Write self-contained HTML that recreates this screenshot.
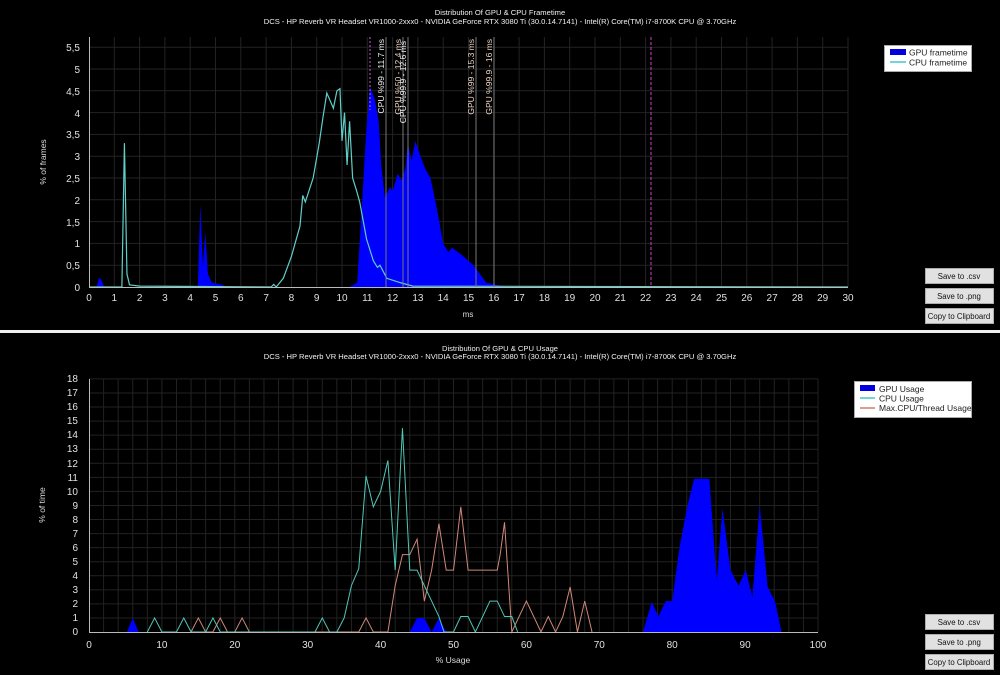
<!DOCTYPE html>
<html><head><meta charset="utf-8"><style>
html,body{margin:0;padding:0;background:#000;}
svg{display:block;font-family:"Liberation Sans",sans-serif;}
.btn{fill:#e1e1e1;stroke:#adadad;stroke-width:1}
.bt{font-size:7.8px;fill:#111;text-anchor:middle}
.ax{font-size:10px;fill:#e0e0e0}
.tt{font-size:7.6px;fill:#f0f0f0;text-anchor:middle}
</style></head><body>
<svg width="1000" height="675" viewBox="0 0 1000 675">
<rect width="1000" height="675" fill="#000"/>
<!-- TOP CHART -->
<text class="tt" x="500" y="15">Distribution Of GPU &amp; CPU Frametime</text>
<text class="tt" x="500" y="24">DCS - HP Reverb VR Headset VR1000-2xxx0 - NVIDIA GeForce RTX 3080 Ti (30.0.14.7141) - Intel(R) Core(TM) i7-8700K CPU @ 3.70GHz</text>
<g transform="translate(89,287) scale(25.3,-43.6)">
<path vector-effect="non-scaling-stroke" stroke="#232323" stroke-width="1" fill="none" d="M1 0V5.73M2 0V5.73M3 0V5.73M4 0V5.73M5 0V5.73M6 0V5.73M7 0V5.73M8 0V5.73M9 0V5.73M10 0V5.73M11 0V5.73M12 0V5.73M13 0V5.73M14 0V5.73M15 0V5.73M16 0V5.73M17 0V5.73M18 0V5.73M19 0V5.73M20 0V5.73M21 0V5.73M22 0V5.73M23 0V5.73M24 0V5.73M25 0V5.73M26 0V5.73M27 0V5.73M28 0V5.73M29 0V5.73M30 0V5.73M0 0.5H30M0 1H30M0 1.5H30M0 2H30M0 2.5H30M0 3H30M0 3.5H30M0 4H30M0 4.5H30M0 5H30M0 5.5H30"/>
<polygon fill="#0000ff" points="0.3,0 0.4,0.22 0.5,0.15 0.6,0 4.3,0 4.4,1.9 4.5,0.5 4.6,1.25 4.7,0.3 4.85,0.1 5.3,0.05 5.4,0 10.3,0 10.6,0.1 10.8,2.0 10.95,3.5 11.1,4.6 11.3,4.3 11.45,3.8 11.55,2.8 11.7,2.05 11.9,2.3 12.0,2.2 12.2,2.6 12.35,2.45 12.5,2.7 12.6,3.3 12.75,2.9 12.9,3.35 13.1,3.0 13.3,2.7 13.5,2.5 13.75,1.8 14.0,1.0 14.2,0.8 14.35,0.9 14.7,0.75 15.2,0.5 15.45,0.3 15.7,0.1 16.1,0.05 16.5,0"/>
<polyline vector-effect="non-scaling-stroke" fill="none" stroke="#5fcfc8" stroke-width="1.2" points="0,0 1.3,0 1.4,3.3 1.5,0.3 1.6,0.05 2,0.02 7.2,0 7.3,0.06 7.4,0 7.68,0.2 8.0,0.7 8.34,1.4 8.45,2.1 8.55,1.95 8.86,2.5 9.1,3.3 9.25,3.9 9.4,4.45 9.66,4.1 9.8,4.5 9.92,4.55 10.0,3.35 10.1,4.0 10.2,2.8 10.3,3.8 10.42,2.5 10.58,2.2 10.7,1.95 10.97,1.1 11.24,0.6 11.4,0.45 11.5,0.5 11.77,0.2 12.3,0.1 12.8,0.02 30,0"/>
</g>
<line x1="89.5" y1="37" x2="89.5" y2="287" stroke="#bbb"/>
<line x1="89" y1="287.5" x2="848" y2="287.5" stroke="#bbb"/>
<line x1="370" y1="37" x2="370" y2="110" stroke="#d060d0" stroke-dasharray="2,2"/>
<line x1="386" y1="37" x2="386" y2="287" stroke="#777"/>
<line x1="403" y1="37" x2="403" y2="287" stroke="#777"/>
<line x1="408" y1="37" x2="408" y2="287" stroke="#777"/>
<line x1="476" y1="37" x2="476" y2="287" stroke="#777"/>
<line x1="494" y1="37" x2="494" y2="287" stroke="#777"/>
<line x1="651" y1="37" x2="651" y2="287" stroke="#d040d0" stroke-dasharray="3,2"/>
<g font-size="8.5" text-anchor="end">
<text transform="translate(384,39) rotate(-90)" fill="#f0f0f0">CPU %99 - 11.7 ms</text>
<text transform="translate(401,39) rotate(-90)" fill="#e8d0c0">GPU %50 - 12.4 ms</text>
<text transform="translate(406,41) rotate(-90)" fill="#f0f0f0">CPU %99.9 - 12.6 ms</text>
<text transform="translate(474,39) rotate(-90)" fill="#e8d0c0">GPU %99 - 15.3 ms</text>
<text transform="translate(492,39) rotate(-90)" fill="#e8d0c0">GPU %99.9 - 16 ms</text>
</g>
<g class="ax" text-anchor="end">
<text x="80" y="291">0</text><text x="80" y="269">0,5</text><text x="80" y="247">1</text><text x="80" y="226">1,5</text><text x="80" y="204">2</text><text x="80" y="182">2,5</text><text x="80" y="160">3</text><text x="80" y="138">3,5</text><text x="80" y="117">4</text><text x="80" y="95">4,5</text><text x="80" y="73">5</text><text x="80" y="51">5,5</text>
</g>
<g class="ax" text-anchor="middle">
<text x="89" y="301">0</text><text x="114.3" y="301">1</text><text x="139.6" y="301">2</text><text x="164.9" y="301">3</text><text x="190.2" y="301">4</text><text x="215.5" y="301">5</text><text x="240.8" y="301">6</text><text x="266.1" y="301">7</text><text x="291.4" y="301">8</text><text x="316.7" y="301">9</text><text x="342" y="301">10</text><text x="367.3" y="301">11</text><text x="392.6" y="301">12</text><text x="417.9" y="301">13</text><text x="443.2" y="301">14</text><text x="468.5" y="301">15</text><text x="493.8" y="301">16</text><text x="519.1" y="301">17</text><text x="544.4" y="301">18</text><text x="569.7" y="301">19</text><text x="595" y="301">20</text><text x="620.3" y="301">21</text><text x="645.6" y="301">22</text><text x="670.9" y="301">23</text><text x="696.2" y="301">24</text><text x="721.5" y="301">25</text><text x="746.8" y="301">26</text><text x="772.1" y="301">27</text><text x="797.4" y="301">28</text><text x="822.7" y="301">29</text><text x="848" y="301">30</text>
</g>
<text x="468" y="317" font-size="8" fill="#ddd" text-anchor="middle">ms</text>
<text transform="translate(46,162) rotate(-90)" font-size="8.5" fill="#ddd" text-anchor="middle">% of frames</text>
<rect x="884.5" y="45.5" width="87" height="26" fill="#fff" stroke="#aaa"/>
<rect x="890" y="49" width="16" height="6" fill="#0000e0"/>
<line x1="890" y1="62" x2="906" y2="62" stroke="#40c8d0" stroke-width="1.5"/>
<text x="909" y="55.5" font-size="8.5" fill="#222">GPU frametime</text>
<text x="909" y="65.5" font-size="8.5" fill="#222">CPU frametime</text>
<rect class="btn" x="925.5" y="268.5" width="68" height="15"/><text class="bt" x="959" y="279">Save to .csv</text>
<rect class="btn" x="925.5" y="288.5" width="68" height="15"/><text class="bt" x="959" y="299">Save to .png</text>
<rect class="btn" x="925.5" y="308.5" width="68" height="15"/><text class="bt" x="959" y="319">Copy to Clipboard</text>
<rect x="0" y="330" width="1000" height="3" fill="#f0f0f0"/>
<!-- BOTTOM CHART -->
<text class="tt" x="500" y="351">Distribution Of GPU &amp; CPU Usage</text>
<text class="tt" x="500" y="359">DCS - HP Reverb VR Headset VR1000-2xxx0 - NVIDIA GeForce RTX 3080 Ti (30.0.14.7141) - Intel(R) Core(TM) i7-8700K CPU @ 3.70GHz</text>
<g transform="translate(89,632) scale(7.29,-14.06)">
<path vector-effect="non-scaling-stroke" stroke="#222" stroke-width="1" fill="none" d="M2 0V18M4 0V18M6 0V18M8 0V18M10 0V18M12 0V18M14 0V18M16 0V18M18 0V18M20 0V18M22 0V18M24 0V18M26 0V18M28 0V18M30 0V18M32 0V18M34 0V18M36 0V18M38 0V18M40 0V18M42 0V18M44 0V18M46 0V18M48 0V18M50 0V18M52 0V18M54 0V18M56 0V18M58 0V18M60 0V18M62 0V18M64 0V18M66 0V18M68 0V18M70 0V18M72 0V18M74 0V18M76 0V18M78 0V18M80 0V18M82 0V18M84 0V18M86 0V18M88 0V18M90 0V18M92 0V18M94 0V18M96 0V18M98 0V18M100 0V18M0 1H100M0 2H100M0 3H100M0 4H100M0 5H100M0 6H100M0 7H100M0 8H100M0 9H100M0 10H100M0 11H100M0 12H100M0 13H100M0 14H100M0 15H100M0 16H100M0 17H100M0 18H100"/>
<polygon fill="#0000ff" points="5.2,0 6,1 6.8,0 44,0 45,1 46,1 47,0 48,1 49,0 76,0 77.2,2.15 78.1,1.1 79.1,2.2 80,2.2 81,6 82.1,9 83,10.9 85.1,10.9 86.1,3.7 86.9,8.8 88,4.4 89.1,3.3 90.1,4.4 91,2.5 92,9 93.1,3.2 94.1,2.2 95,0"/>
<polyline vector-effect="non-scaling-stroke" fill="none" stroke="#d08878" stroke-width="1" points="14,0 15,1 16,0 17,0 18,1 19,0 20,0 21,1 22,0 37,0 38,1 39,0 41,0 42,3.3 43,5.5 44,5.5 45,6.6 46,2.2 47,4.4 48,7.7 49,4.4 50,4.4 51,8.9 52,4.4 56,4.4 56.4,5.5 57,7.8 58,0 60,2.2 62,0 63,1.1 64,0 65,1.1 66,3.2 67,0 68,2.2 69,0"/>
<polyline vector-effect="non-scaling-stroke" fill="none" stroke="#50c8b8" stroke-width="1" points="8,0 9,1 10,0 12,0 13,1 14,0 16,0 17,1 18,0 31,0 32,1 33,0 34,0 35,1 36,3.3 37,4.5 38,11.1 39,8.9 40,10 41,12.2 42,4.4 43,14.5 44,4.4 45,4.4 46,3.3 47,2.2 48,1.1 48.7,0 50,0 51,1.1 52,1.1 53,0 54,1.1 55,2.2 56,2.2 57,1.1 58,1.1 58.8,0"/>
</g>
<line x1="89.5" y1="379" x2="89.5" y2="632" stroke="#bbb"/>
<line x1="89" y1="632.5" x2="818" y2="632.5" stroke="#bbb"/>
<g class="ax" text-anchor="end">
<text x="78" y="635">0</text><text x="78" y="621">1</text><text x="78" y="607">2</text><text x="78" y="593">3</text><text x="78" y="579">4</text><text x="78" y="565">5</text><text x="78" y="551">6</text><text x="78" y="537">7</text><text x="78" y="523">8</text><text x="78" y="509">9</text><text x="78" y="495">10</text><text x="78" y="481">11</text><text x="78" y="467">12</text><text x="78" y="452">13</text><text x="78" y="438">14</text><text x="78" y="424">15</text><text x="78" y="410">16</text><text x="78" y="396">17</text><text x="78" y="382">18</text>
</g>
<g class="ax" text-anchor="middle">
<text x="89" y="648">0</text><text x="161.9" y="648">10</text><text x="234.8" y="648">20</text><text x="307.7" y="648">30</text><text x="380.6" y="648">40</text><text x="453.5" y="648">50</text><text x="526.4" y="648">60</text><text x="599.3" y="648">70</text><text x="672.2" y="648">80</text><text x="745.1" y="648">90</text><text x="818" y="648">100</text>
</g>
<text x="453" y="663" font-size="8.5" fill="#ddd" text-anchor="middle">% Usage</text>
<text transform="translate(45,505) rotate(-90)" font-size="8.5" fill="#ddd" text-anchor="middle">% of time</text>
<rect x="854.5" y="381.5" width="117" height="36" fill="#fff" stroke="#aaa"/>
<rect x="860" y="385" width="15" height="6" fill="#0000e0"/>
<line x1="860" y1="398" x2="875" y2="398" stroke="#40c8c0" stroke-width="1.5"/>
<line x1="860" y1="408" x2="875" y2="408" stroke="#d08060" stroke-width="1.5"/>
<text x="879" y="392" font-size="8.5" fill="#222">GPU Usage</text>
<text x="879" y="401.5" font-size="8.5" fill="#222">CPU Usage</text>
<text x="879" y="411" font-size="8.5" fill="#222">Max.CPU/Thread Usage</text>
<rect class="btn" x="925.5" y="614.5" width="68" height="15"/><text class="bt" x="959" y="625">Save to .csv</text>
<rect class="btn" x="925.5" y="634.5" width="68" height="15"/><text class="bt" x="959" y="645">Save to .png</text>
<rect class="btn" x="925.5" y="654.5" width="68" height="15"/><text class="bt" x="959" y="665">Copy to Clipboard</text>
</svg>
</body></html>
